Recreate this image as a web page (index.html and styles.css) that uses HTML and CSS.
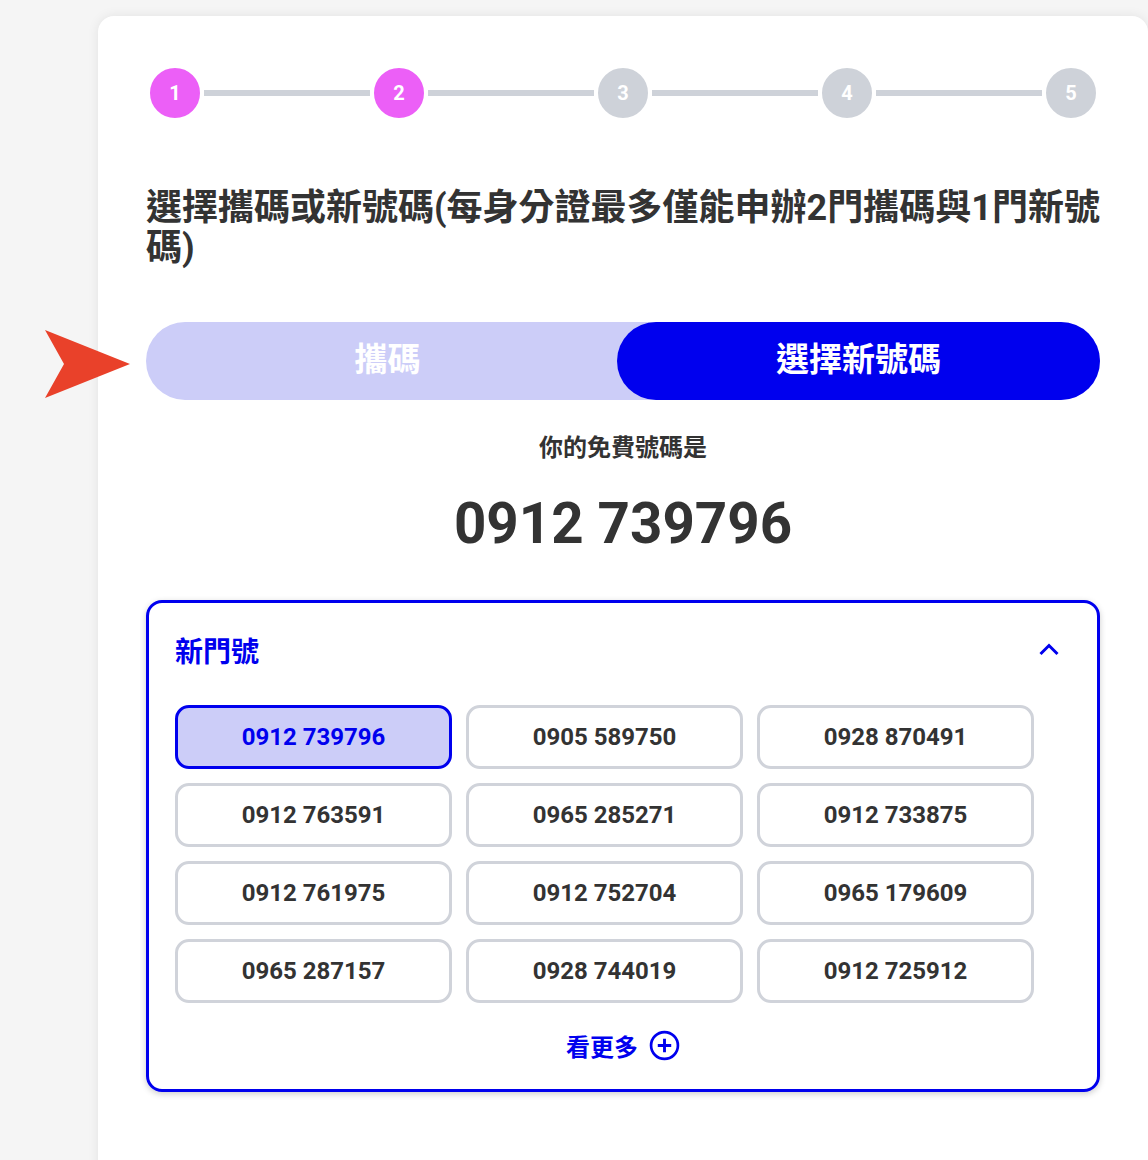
FILE: index.html
```html
<!DOCTYPE html>
<html lang="zh-Hant">
  <head>
    <meta charset="UTF-8" />
    <meta name="viewport" content="width=device-width, initial-scale=1.0" />
    <title>選擇門號</title>
    <link rel="stylesheet" href="styles.css">
  </head>
  <body>
    <svg class="pointer" width="85" height="68" viewBox="0 0 85 68">
      <polygon points="0,0 85,34 0,68 19,34" fill="#e9412a" />
    </svg>

    <div class="card">
      <div class="stepper">
        <span class="step done">1</span>
        <span class="line"></span>
        <span class="step done">2</span>
        <span class="line"></span>
        <span class="step">3</span>
        <span class="line"></span>
        <span class="step">4</span>
        <span class="line"></span>
        <span class="step">5</span>
      </div>

      <h1 class="title">選擇攜碼或新號碼(每身分證最多僅能申辦2門攜碼與1門新號碼)</h1>

      <div class="toggle">
        <button class="toggle-btn">攜碼</button>
        <button class="toggle-btn active">選擇新號碼</button>
      </div>

      <p class="free-label">你的免費號碼是</p>
      <p class="free-number">0912 739796</p>

      <div class="number-box">
        <div class="box-header">
          <span class="box-title">新門號</span>
          <svg width="24" height="24" viewBox="0 0 24 24">
            <path d="M3.5 16 L12 7.5 L20.5 16" fill="none" stroke="#0000ee" stroke-width="3" />
          </svg>
        </div>

        <div class="number-grid">
          <button class="num selected">0912 739796</button>
          <button class="num">0905 589750</button>
          <button class="num">0928 870491</button>
          <button class="num">0912 763591</button>
          <button class="num">0965 285271</button>
          <button class="num">0912 733875</button>
          <button class="num">0912 761975</button>
          <button class="num">0912 752704</button>
          <button class="num">0965 179609</button>
          <button class="num">0965 287157</button>
          <button class="num">0928 744019</button>
          <button class="num">0912 725912</button>
        </div>

        <div class="more">
          <span>看更多</span>
          <svg width="31" height="31" viewBox="0 0 30 30">
            <circle cx="15" cy="15" r="13" fill="none" stroke="#0000ee" stroke-width="2.6" />
            <path d="M15 8.5 V21.5 M8.5 15 H21.5" stroke="#0000ee" stroke-width="2.8" />
          </svg>
        </div>
      </div>
    </div>
  </body>
</html>
```

FILE: styles.css
```css
* {
  margin: 0;
  padding: 0;
  box-sizing: border-box;
}
body {
  font-family: Roboto, "Noto Sans CJK TC", sans-serif;
  background-color: #f5f5f5;
  color: #333333;
  padding: 16px 0 0 98px;
  overflow: hidden;
}
.pointer {
  position: absolute;
  left: 45px;
  top: 330px;
  z-index: 2;
}
.card {
  width: 1050px;
  background-color: #ffffff;
  border-radius: 16px;
  box-shadow: 0 0 12px rgba(0, 0, 0, 0.08);
  padding: 48px 48px 100px;
}
.stepper {
  display: flex;
  align-items: center;
}
.step {
  width: 58px;
  height: 58px;
  border-radius: 50%;
  border: 4px solid #ffffff;
  background-color: #ced2d9;
  color: #ffffff;
  font-size: 20px;
  font-weight: bold;
  display: flex;
  align-items: center;
  justify-content: center;
}
.step.done {
  background-color: #ec5ff7;
}
.line {
  flex: 1;
  height: 6px;
  background-color: #ced2d9;
}
.title {
  margin-top: 66px;
  font-size: 36px;
  line-height: 40px;
  font-weight: bold;
  color: #333333;
}
.toggle {
  margin-top: 54px;
  display: flex;
  height: 78px;
  border-radius: 39px;
  background-color: #cccdf8;
}
.toggle-btn {
  flex: 1;
  border: none;
  background: none;
  color: #ffffff;
  font-family: inherit;
  font-size: 33px;
  font-weight: bold;
  border-radius: 39px;
  padding-bottom: 8px;
  cursor: pointer;
}
.toggle-btn.active {
  background-color: #0000ee;
  margin-left: -12px;
}
.free-label {
  margin-top: 32px;
  text-align: center;
  font-size: 24px;
  line-height: 32px;
  font-weight: bold;
}
.free-number {
  margin-top: 28px;
  text-align: center;
  font-size: 56.5px;
  line-height: 64px;
  font-weight: bold;
}
.number-box {
  margin-top: 44px;
  border: 3px solid #0000ee;
  border-radius: 16px;
  box-shadow: 0 2px 6px rgba(0, 0, 0, 0.2);
  padding: 29px 36px 28px 26px;
}
.box-header {
  display: flex;
  justify-content: space-between;
  align-items: center;
  height: 36px;
}
.box-title {
  color: #0000ee;
  font-size: 28px;
  font-weight: bold;
}
.number-grid {
  margin-top: 37px;
  display: grid;
  grid-template-columns: repeat(3, 277px);
  gap: 14px;
}
.num {
  height: 64px;
  border: 3px solid #d0d3da;
  border-radius: 14px;
  background-color: #ffffff;
  color: #333333;
  font-family: inherit;
  font-size: 24px;
  font-weight: bold;
  cursor: pointer;
}
.num.selected {
  background-color: #cccdf8;
  border-color: #0000ee;
  color: #0000ee;
}
.more {
  margin-top: 26px;
  padding-left: 10px;
  display: flex;
  justify-content: center;
  align-items: center;
  gap: 11px;
  height: 32px;
  color: #0000ee;
  font-size: 24px;
  font-weight: bold;
}
```
